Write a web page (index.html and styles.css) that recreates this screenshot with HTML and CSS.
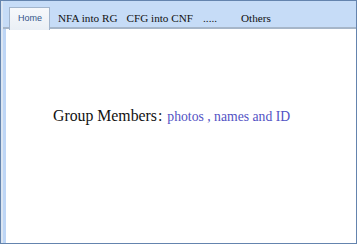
FILE: index.html
```html
<!DOCTYPE html>
<html>
<head>
<meta charset="utf-8">
<link rel="stylesheet" href="styles.css">
</head>
<body>
<div class="frame">
  <div class="inner">
    <nav class="tabbar">
      <span class="tab active">Home</span>
      <span class="tab">NFA into RG</span>
      <span class="tab">CFG into CNF</span>
      <span class="tab dots">.....</span>
      <span class="tab">Others</span>
    </nav>
    <main class="content">
      <h1 class="heading">Group Members<span class="colon">:</span> <span class="sub">photos , names and ID</span></h1>
    </main>
  </div>
</div>
</body>
</html>
```
FILE: styles.css
```css
html, body {
  margin: 0;
  padding: 0;
  background: #ffffff;
}
.frame {
  width: 357px;
  height: 244px;
  box-sizing: border-box;
  border: 1px solid #6484ae;
  display: flex;
}
.inner {
  flex: 1;
  display: flex;
  flex-direction: column;
  border-left: 2px solid #dce6f2;
}
.tabbar {
  height: 28px;
  box-sizing: border-box;
  background: #c6dcf7;
  border-bottom: 2px solid #a6b6c9;
  display: flex;
  align-items: flex-start;
  padding: 6px 0 0 6px;
  gap: 9px;
  font-family: "Liberation Serif", "Times New Roman", serif;
  font-size: 11.2px;
  color: #111111;
}
.tab {
  height: 22px;
  line-height: 22px;
  white-space: nowrap;
}
.tab.active {
  box-sizing: border-box;
  height: 23px;
  line-height: 20px;
  padding: 0 7px 0 8px;
  margin-right: -1px;
  background: linear-gradient(#f6f8fb, #eaeff5);
  border: 1px solid #a2b5cd;
  border-bottom: none;
  font-family: "Liberation Sans", Arial, sans-serif;
  font-size: 9px;
  color: #34558a;
}
.tab.dots {
  margin-left: 1px;
  margin-right: 15px;
}
.content {
  flex: 1;
  border-left: 3px solid #bed6f6;
  padding: 78px 0 0 47px;
}
.heading {
  margin: 0;
  font-family: "Liberation Serif", "Times New Roman", serif;
  font-weight: normal;
  font-size: 15.8px;
  line-height: 18px;
  color: #111111;
  white-space: nowrap;
}
.colon {
  color: #222222;
  margin-left: 1px;
  margin-right: 1px;
}
.sub {
  font-size: 13.7px;
  color: #5252c4;
}
```
